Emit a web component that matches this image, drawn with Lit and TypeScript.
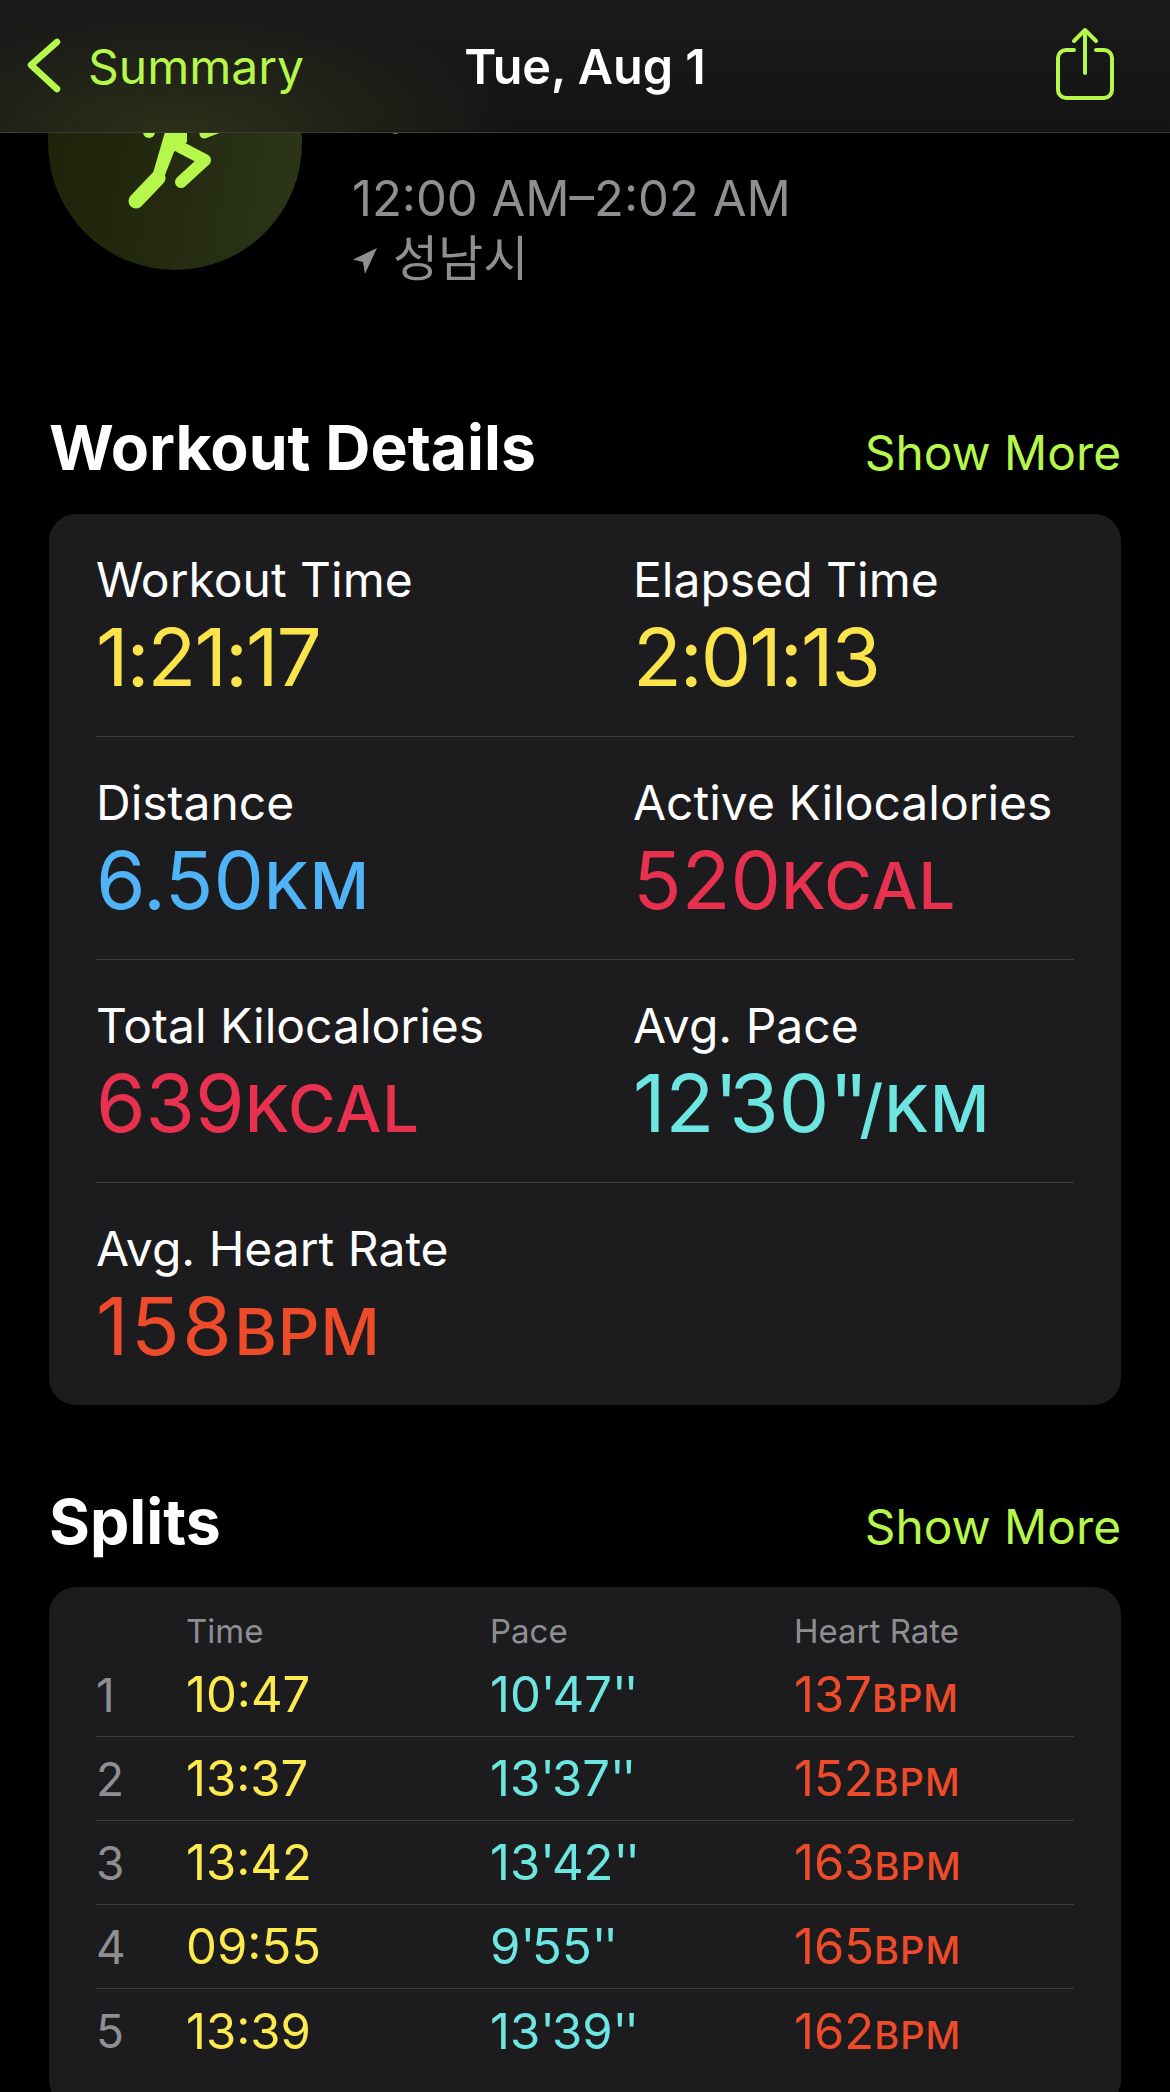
import { LitElement, html, css } from "lit";
import { customElement } from "lit/decorators.js";

const details = [
  { label: "Workout Time", value: "1:21:17", unit: "", kind: "time" },
  { label: "Elapsed Time", value: "2:01:13", unit: "", kind: "time" },
  { label: "Distance", value: "6.50", unit: "KM", kind: "dist" },
  { label: "Active Kilocalories", value: "520", unit: "KCAL", kind: "kcal" },
  { label: "Total Kilocalories", value: "639", unit: "KCAL", kind: "kcal" },
  { label: "Avg. Pace", value: "12'30''", unit: "/KM", kind: "pace" },
  { label: "Avg. Heart Rate", value: "158", unit: "BPM", kind: "hr" },
];

const splits = [
  ["1", "10:47", "10'47''", "137"],
  ["2", "13:37", "13'37''", "152"],
  ["3", "13:42", "13'42''", "163"],
  ["4", "09:55", "9'55''", "165"],
  ["5", "13:39", "13'39''", "162"],
];

const quotes = (s: string) =>
  s.split(/('+)/).map((part) => (part.startsWith("'") ? html`<span class="q">${part}</span>` : part));

@customElement("app-root")
export class AppRoot extends LitElement {
  static styles = css`
    :host { display: block; width: 1170px; height: 2092px; background: #000; overflow: hidden; font-family: Inter, "Noto Sans CJK KR", sans-serif; color: #fff; }
    .nav { height: 133px; box-sizing: border-box; border-bottom: 1px solid #3a3a3a; background: radial-gradient(ellipse 340px 125px at 176px 132px, #2c3019, rgba(44,48,25,0)), linear-gradient(#1a1a1a, #141414); display: grid; grid-template-columns: 1fr auto 1fr; align-items: center; }
    .back { display: flex; align-items: center; gap: 26px; margin-left: 26px; color: #b5f84b; font-size: 48px; font-weight: 400; }
    .back svg { width: 36px; height: 58px; }
    .navtitle { font-size: 48.5px; font-weight: 600; text-align: center; }
    .share { justify-self: end; width: 60px; height: 74px; margin: -6px 55px 0 0; }
    .scroll { height: 1959px; overflow: hidden; }
    .hero { display: flex; gap: 50px; margin-top: -117px; padding-left: 48px; height: 254px; }
    .disc { width: 254px; height: 254px; border-radius: 50%; background: linear-gradient(100deg, #1e2309, #232a10 50%, #2e3719); flex: none; }
    .disc svg { display: block; width: 254px; height: 254px; }
    .herotext { padding-top: 61px; font-size: 49px; color: #8e8e93; line-height: 60px; }
    .goal { color: #b5f84b; height: 92px; }
    .loc { display: flex; align-items: center; gap: 15px; }
    .loc svg { width: 26px; height: 28px; margin-top: 4px; }
    .sechead { display: flex; justify-content: space-between; align-items: baseline; padding: 0 49px; }
    .sechead h2 { margin: 0; font-size: 62.5px; font-weight: 700; line-height: 76px; }
    .more { color: #b5f84b; font-size: 47.8px; }
    .first { margin-top: 139px; }
    .second { margin-top: 78px; }
    .card { margin: 29px 49px 0; background: #1c1c1e; border-radius: 27px; padding: 0 47px; }
    .grid { display: grid; grid-template-columns: 537px 1fr; }
    .cell { height: 223px; box-sizing: border-box; padding-top: 37px; border-bottom: 1px solid #3c3c3e; }
    .cell:last-child { border-bottom: none; grid-column: 1 / 3; height: 222px; }
    .label { font-size: 48px; line-height: 58px; }
    .val { font-size: 80px; line-height: 96px; white-space: nowrap; }
    .val .q { letter-spacing: -9px; }
    .unit { font-size: 65px; font-weight: 500; letter-spacing: 1px; }
    .time { color: #fbe34b; letter-spacing: -2px; }
    .dist { color: #4fb3f6; }
    .kcal { color: #e8304f; }
    .pace { color: #6de6e2; }
    .hr { color: #ee4b2b; letter-spacing: 2.5px; }
    .splits { height: 520px; margin-top: 28px; }
    .row { display: grid; grid-template-columns: 90px 304px 304px 1fr; height: 84px; box-sizing: border-box; border-bottom: 1px solid #3c3c3e; align-items: center; font-size: 49px; }
    .row.hd { height: 66px; padding-top: 22px; border-bottom: none; font-size: 33px; color: #8e8e93; }
    .row:last-child { border-bottom: none; }
    .num { color: #8e8e93; font-size: 46px; }
    .t { color: #fdea4e; }
    .p { color: #6de6e2; }
    .p .q { letter-spacing: -3px; }
    .h { color: #ee4b2b; }
    .h span { font-size: 38px; font-weight: 500; letter-spacing: 1px; }
  `;

  render() {
    return html`
      <div class="nav">
        <div class="back">
          <svg viewBox="0 0 36 58" fill="none" stroke="#b5f84b" stroke-width="6.5" stroke-linecap="round" stroke-linejoin="round"><path d="M31 5 5 28l26 24"/></svg>
          <span>Summary</span>
        </div>
        <div class="navtitle">Tue, Aug 1</div>
        <svg class="share" viewBox="0 0 60 74" fill="none" stroke="#b5f84b" stroke-width="4" stroke-linecap="round" stroke-linejoin="round"><path d="M19 24H11a8 8 0 0 0-8 8v32a8 8 0 0 0 8 8h38a8 8 0 0 0 8-8V32a8 8 0 0 0-8-8h-8"/><path d="M30 47V4M19 15 30 4l11 11"/></svg>
      </div>
      <div class="scroll">
        <div class="hero">
          <div class="disc">
            <svg viewBox="48 16 254 254">
              <path d="M165 100V132L153 173 163 180 174 152 187 142V100Z" fill="#b5f84b"/>
              <g fill="none" stroke="#b5f84b" stroke-linecap="round" stroke-linejoin="round">
                <path d="M136 201 158 178" stroke-width="15"/>
                <path d="M180 147 205 160 181 182" stroke-width="12"/>
                <path d="M220 128 204 134" stroke-width="9"/>
                <path d="M149 128V132" stroke-width="12"/>
              </g>
            </svg>
          </div>
          <div class="herotext">
            <div class="goal">Open Goal</div>
            <div>12:00 AM–2:02 AM</div>
            <div class="loc"><svg viewBox="0 0 26 28"><path d="M25 1 1 12.5 11 15l2 12z" fill="#8e8e93"/></svg>성남시</div>
          </div>
        </div>
        <div class="sechead first"><h2>Workout Details</h2><span class="more">Show More</span></div>
        <div class="card grid">
          ${details.map((d) => html`<div class="cell"><div class="label">${d.label}</div><div class="val ${d.kind}">${quotes(d.value)}<span class="unit">${d.unit}</span></div></div>`)}
        </div>
        <div class="sechead second"><h2>Splits</h2><span class="more">Show More</span></div>
        <div class="card splits">
          <div class="row hd"><span></span><span>Time</span><span>Pace</span><span>Heart Rate</span></div>
          ${splits.map((s) => html`<div class="row"><span class="num">${s[0]}</span><span class="t">${s[1]}</span><span class="p">${quotes(s[2])}</span><span class="h">${s[3]}<span>BPM</span></span></div>`)}
        </div>
      </div>
    `;
  }
}
